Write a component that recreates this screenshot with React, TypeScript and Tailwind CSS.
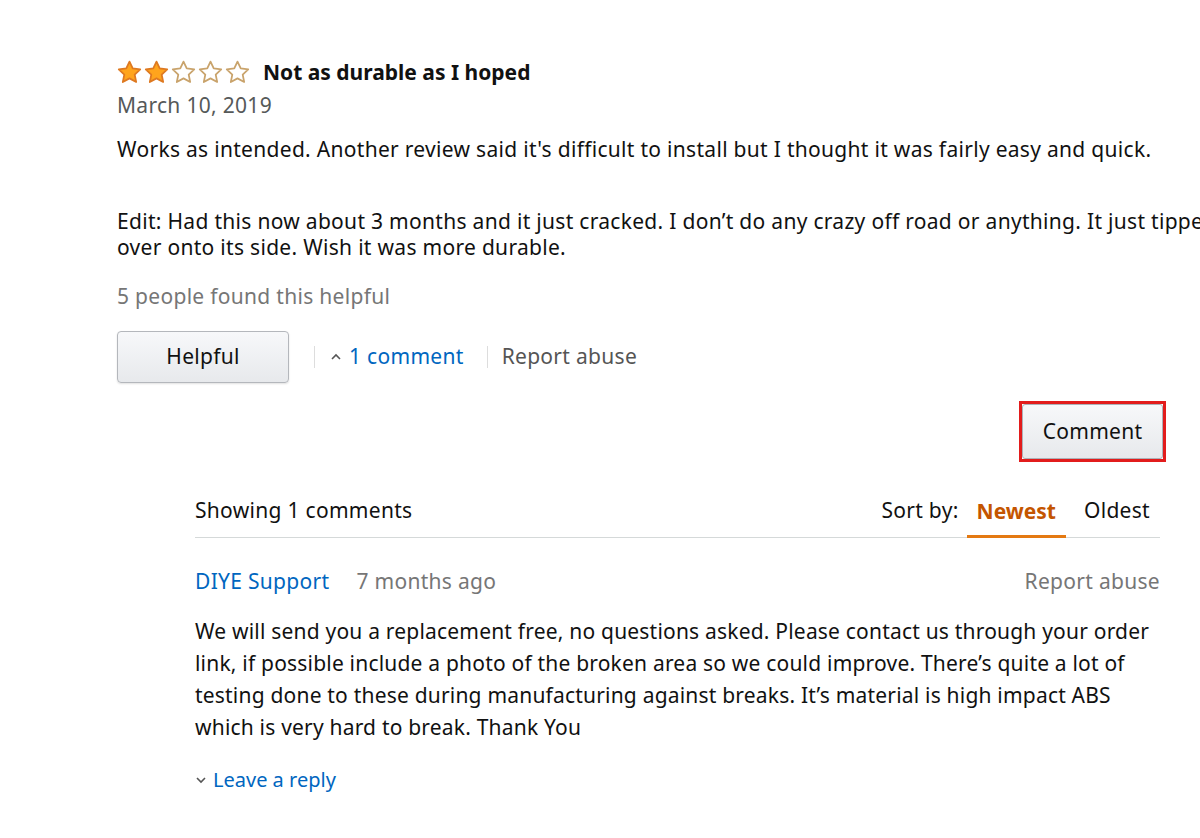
import React from "react";

const Star = ({ filled }: { filled: boolean }) => (
  <svg width="25" height="24" viewBox="0 0 24 23" className="block">
    <path
      d="M12 1.5l3.1 6.6 7.2.9-5.3 5 1.4 7.1L12 17.6l-6.4 3.5 1.4-7.1-5.3-5 7.2-.9z"
      fill={filled ? "#ffa41c" : "#ffffff"}
      stroke={filled ? "#de7921" : "#c9a36b"}
      strokeWidth="1.7"
      strokeLinejoin="round"
    />
  </svg>
);

export default function App() {
  return (
    <div
      className="w-[1200px] h-[838px] overflow-hidden bg-white text-[#111111]"
      style={{ fontFamily: '"Noto Sans", "Open Sans", sans-serif' }}
    >
      <div className="pl-[117px] pt-[59px] w-[1200px]">
        <div className="flex items-center h-[26px]">
          <div className="flex gap-[2px]">
            <Star filled />
            <Star filled />
            <Star filled={false} />
            <Star filled={false} />
            <Star filled={false} />
          </div>
          <span className="ml-[13px] text-[21px] font-bold leading-[26px]">Not as durable as I hoped</span>
        </div>
        <div className="text-[21px] tracking-[0.3px] leading-[32px] text-[#565959] mt-[4px]">March 10, 2019</div>
        <div className="text-[21px] tracking-[0.3px] leading-[26px] whitespace-nowrap mt-[15px]">
          Works as intended. Another review said it's difficult to install but I thought it was fairly easy and quick.
        </div>
        <div className="text-[21px] tracking-[0.3px] leading-[26px] whitespace-nowrap mt-[46px]">
          Edit: Had this now about 3 months and it just cracked. I don’t do any crazy off road or anything. It just tipped
          <br />
          over onto its side. Wish it was more durable.
        </div>
        <div className="text-[21px] tracking-[0.3px] leading-[26px] text-[#767676] mt-[23px]">5 people found this helpful</div>
        <div className="flex items-center mt-[22px] h-[52px]">
          <button className="w-[172px] h-[52px] rounded-[4px] border border-[#b4b7bc] shadow-[0_1px_2px_rgba(0,0,0,0.12)] bg-gradient-to-b from-[#f7f8fa] to-[#e7e9ec] text-[21px] tracking-[0.3px] text-[#111]">
            Helpful
          </button>
          <div className="ml-[25px] w-px h-[22px] bg-[#ddd]" />
          <div className="ml-[15px] flex items-center text-[21px] tracking-[0.3px] text-[#0066c0]">
            <svg width="12" height="10" viewBox="0 0 12 10" className="mr-[7px]">
              <path d="M2 7l4-4 4 4" fill="none" stroke="#555" strokeWidth="1.6" />
            </svg>
            1 comment
          </div>
          <div className="ml-[23px] w-px h-[22px] bg-[#ddd]" />
          <div className="ml-[14px] text-[21px] tracking-[0.3px] text-[#555]">Report abuse</div>
        </div>
      </div>

      <div className="w-[1200px] flex justify-end pr-[34px] mt-[18px]">
        <div className="border-[3px] border-[#e21c1c]">
          <button className="block w-[141px] h-[55px] rounded-[3px] border border-[#adb1b8] bg-gradient-to-b from-[#f7f8fa] to-[#e7e9ec] text-[21px] tracking-[0.3px] text-[#111]">
            Comment
          </button>
        </div>
      </div>

      <div className="ml-[195px] w-[965px] mt-[35px]">
        <div className="flex items-end justify-between border-b border-[#d5d9d9]">
          <div className="text-[21px] tracking-[0.3px] leading-[26px] pb-[14px]">Showing 1 comments</div>
          <div className="flex items-end text-[21px] leading-[26px]">
            <span className="pb-[14px] mr-[8px] tracking-[0.3px] text-[#111]">Sort by:</span>
            <span className="px-[10px] pb-[11px] border-b-[3px] border-[#e47911] text-[#c45500] font-bold -mb-px">Newest</span>
            <span className="pl-[18px] pb-[14px] pr-[10px] tracking-[0.3px]">Oldest</span>
          </div>
        </div>
        <div className="flex justify-between items-center mt-[29px] text-[21px] tracking-[0.3px] leading-[28px]">
          <div className="flex">
            <span className="text-[#0066c0]">DIYE Support</span>
            <span className="ml-[27px] text-[#767676]">7 months ago</span>
          </div>
          <span className="text-[#767676]">Report abuse</span>
        </div>
        <div className="text-[21px] tracking-[0.2px] leading-[32px] mt-[20px] whitespace-nowrap">
          We will send you a replacement free, no questions asked. Please contact us through your order
          <br />
          link, if possible include a photo of the broken area so we could improve. There’s quite a lot of
          <br />
          testing done to these during manufacturing against breaks. It’s material is high impact ABS
          <br />
          which is very hard to break. Thank You
        </div>
        <div className="flex items-center mt-[24px] text-[20px] leading-[26px] text-[#0066c0]">
          <svg width="12" height="10" viewBox="0 0 12 10" className="mr-[6px]">
            <path d="M2 3l4 4 4-4" fill="none" stroke="#555" strokeWidth="1.6" />
          </svg>
          Leave a reply
        </div>
      </div>
    </div>
  );
}
